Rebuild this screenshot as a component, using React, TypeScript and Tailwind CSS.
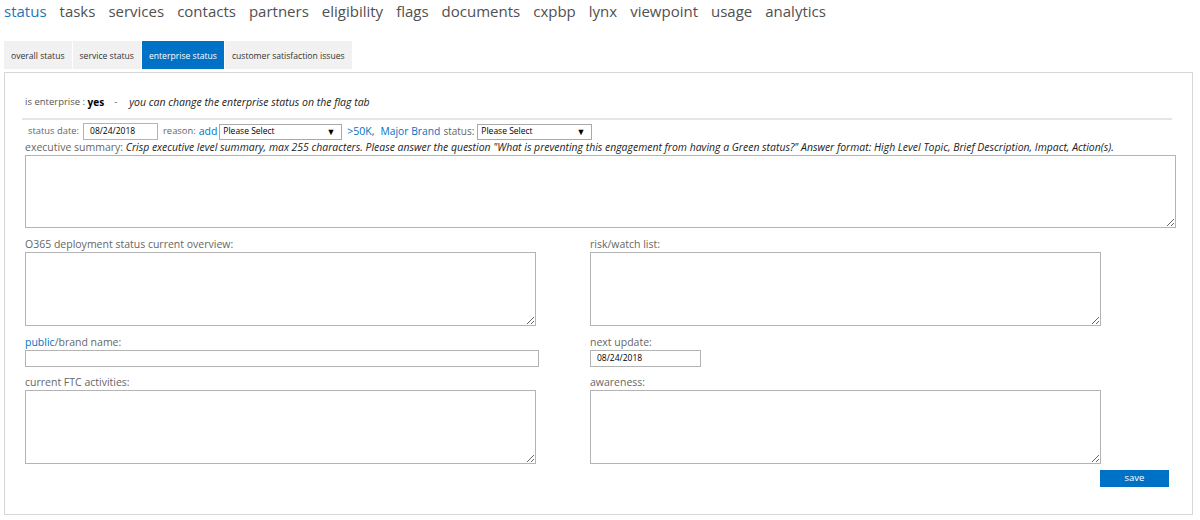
import React from "react";

const navItems = ["status", "tasks", "services", "contacts", "partners", "eligibility", "flags", "documents", "cxpbp", "lynx", "viewpoint", "usage", "analytics"];
const tabs = ["overall status", "service status", "enterprise status", "customer satisfaction issues"];

function Select({ w }: { w: string }) {
  return (
    <div className={`${w} h-[16px] border border-[#a9a9a9] bg-white flex items-center justify-between pl-[3px] pr-[6px] text-[8.5px] text-black`}>
      <span>Please Select</span>
      <span className="text-[9px]">▼</span>
    </div>
  );
}

function TA({ w, h }: { w: string; h: string }) {
  return <textarea className={`${w} ${h} block border border-[#b4b4b4] bg-white outline-none`} />;
}

export default function App() {
  return (
    <div className="w-[1200px] h-[520px] bg-white overflow-hidden" style={{ fontFamily: '"Segoe UI", "Open Sans", "Noto Sans", sans-serif' }}>
      <div className="flex gap-[13px] pl-[4px] h-[41px] text-[15px] leading-[22px] text-[#505050]">
        {navItems.map((n, i) => (
          <span key={n} className={i === 0 ? "text-[#1e74b8]" : ""}>{n}</span>
        ))}
      </div>
      <div className="flex pl-[4px] gap-[1px] h-[29px]">
        {tabs.map((t, i) => (
          <div key={t} className={`h-[28px] px-[7px] pt-[2px] flex items-center text-[8.6px] ${i === 2 ? "bg-[#0072c6] text-white" : "bg-[#f1f1f1] text-[#333]"}`}>{t}</div>
        ))}
      </div>
      <div className="ml-[4px] mt-[2px] w-[1189px] h-[443px] border border-[#d7d7d7] pl-[17px] pr-[16px]">
        <div className="h-[21px]" />
        <div className="pl-[3px] text-[9.5px] text-[#555] h-[17px] flex items-center">
          <span>is enterprise :&nbsp;</span>
          <span className="font-bold text-black text-[10px]">yes</span>
          <span className="ml-[10px]">-</span>
          <span className="italic text-[#222] ml-[12px] text-[10.5px]">you can change the enterprise status on the flag tab</span>
        </div>
        <div className="mt-[7px] w-[1150px] border-t-2 border-[#e5e5e5]" />
        <div className="mt-[3px] flex items-center text-[10px] text-[#666] pl-[6px] h-[17px]">
          <span className="text-[9.4px]">status date:</span>
          <div className="ml-[4px] w-[75px] h-[17px] border border-[#b4b4b4] pl-[6px] text-[8.5px] text-black flex items-center">08/24/2018</div>
          <span className="ml-[5px] text-[9.4px]">reason:</span>
          <span className="ml-[3px] text-[10.5px] text-[#0072c6]">add</span>
          <div className="ml-[2px]"><Select w="w-[123px]" /></div>
          <span className="ml-[5px] text-[10.5px] text-[#0072c6]">&gt;50K,</span>
          <span className="ml-[6px] text-[10.3px] text-[#0072c6]">Major Brand</span>
          <span className="ml-[3px]">status:</span>
          <div className="ml-[3px]"><Select w="w-[115px]" /></div>
        </div>
        <div className="mt-[1px] pl-[3px] text-[10.5px] text-[#666] h-[14px] flex items-center whitespace-nowrap">
          <span>executive summary:&nbsp;</span>
          <span className="italic text-[#222] text-[10.45px]">Crisp executive level summary, max 255 characters. Please answer the question "What is preventing this engagement from having a Green status?" Answer format: High Level Topic, Brief Description, Impact, Action(s).</span>
        </div>
        <div className="pl-[3px]">
          <TA w="w-[1151px]" h="h-[73px]" />
        </div>
        <div className="grid grid-cols-[565px_1fr] pl-[3px] mt-[9px] text-[10.5px] text-[#666]">
          <div>
            <div className="h-[15px] flex items-center">O365 deployment status current overview:</div>
            <TA w="w-[511px]" h="h-[74px]" />
            <div className="mt-[9px] h-[15px] flex items-center"><span className="text-[#0072c6]">public</span>/brand name:</div>
            <div className="w-[514px] h-[17px] border border-[#b4b4b4]" />
            <div className="mt-[8px] h-[15px] flex items-center">current FTC activities:</div>
            <TA w="w-[511px]" h="h-[74px]" />
          </div>
          <div>
            <div className="h-[15px] flex items-center">risk/watch list:</div>
            <TA w="w-[511px]" h="h-[74px]" />
            <div className="mt-[9px] h-[15px] flex items-center">next update:</div>
            <div className="w-[111px] h-[17px] border border-[#b4b4b4] pl-[6px] text-[8.5px] text-black flex items-center">08/24/2018</div>
            <div className="mt-[8px] h-[15px] flex items-center">awareness:</div>
            <TA w="w-[511px]" h="h-[74px]" />
            <div className="mt-[6px] ml-[510px] w-[69px] h-[17px] bg-[#0072c6] text-white text-[9.5px] flex items-center justify-center">save</div>
          </div>
        </div>
      </div>
    </div>
  );
}
